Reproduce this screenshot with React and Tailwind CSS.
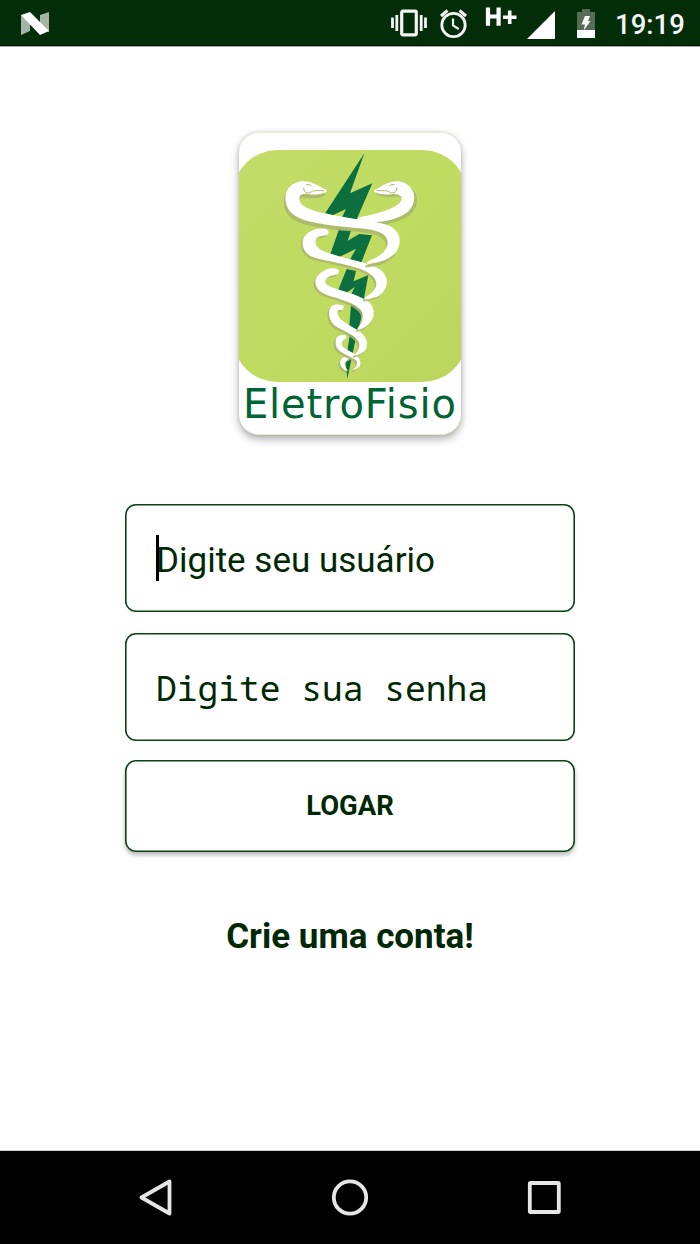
import { useState } from 'react'

// Outlines of the snake coils, from the tail up to the heads
const COILS = [
  // tail
  [[355, 709], [337, 714], [330, 729], [338, 745], [353, 753], [347, 742], [344, 731], [353, 720], [364, 715]],
  [[346, 644], [322, 650], [317, 672], [328, 692], [360, 710], [379, 722], [380, 735], [370, 750], [386, 742], [391, 725], [378, 705], [352, 689], [337, 678], [337, 665], [348, 654]],
  [[338, 556], [309, 556], [297, 578], [309, 612], [351, 637], [379, 656], [388, 674], [383, 692], [374, 705], [388, 703], [406, 690], [411, 666], [395, 639], [362, 618], [334, 599], [323, 582], [325, 571], [338, 569]],
  [[322, 447], [290, 448], [259, 473], [260, 501], [284, 522], [335, 539], [373, 555], [396, 577], [396, 603], [383, 629], [410, 617], [430, 590], [424, 554], [385, 529], [332, 511], [293, 496], [286, 481], [300, 468], [324, 461]],
  [[288, 327], [250, 330], [221, 354], [222, 388], [250, 412], [320, 428], [386, 445], [427, 467], [439, 492], [428, 515], [405, 533], [413, 538], [451, 524], [470, 494], [464, 463], [437, 441], [385, 424], [322, 407], [273, 390], [257, 370], [263, 352], [294, 343]],
]

const RIGHT_SNAKE = 'M431 211 Q446 204 461 194 Q483 184 505 183 Q541 190 551 218 Q559 251 533 276 Q503 300 440 307 L380 304 Q378 291 411 287 Q466 275 492 261 Q518 246 515 231 Q505 220 488 222 Q459 227 433 216 Z'
const LEFT_SNAKE = 'M291 211 Q276 204 261 194 Q239 184 217 183 Q181 188 169 216 Q159 252 184 279 Q206 300 260 309 Q310 319 370 323 Q433 325 459 342 Q480 359 470 382 Q460 406 412 425 Q406 432 420 431 Q471 426 497 398 Q514 375 507 347 Q499 321 459 311 Q425 305 380 298 L295 283 Q239 272 218 256 Q205 244 209 228 Q216 219 234 222 Q264 228 289 216 Z'

// Closed Catmull-Rom curve through the points
function smooth(pts) {
  const n = pts.length
  let d = `M${pts[0][0]} ${pts[0][1]}`
  for (let i = 0; i < n; i++) {
    const [p0, p1, p2, p3] = [pts[(i + n - 1) % n], pts[i], pts[(i + 1) % n], pts[(i + 2) % n]]
    d += `C${p1[0] + (p2[0] - p0[0]) / 6} ${p1[1] + (p2[1] - p0[1]) / 6} ${p2[0] - (p3[0] - p1[0]) / 6} ${p2[1] - (p3[1] - p1[1]) / 6} ${p2[0]} ${p2[1]}`
  }
  return d + 'Z'
}

function Snake({ d, drop = 'translate(-5 6)' }) {
  return (
    <>
      <path d={d} fill="#a9b56c" transform={drop} opacity="0.85" />
      <path d={d} fill="#fff" />
    </>
  )
}

function Emblem() {
  return (
    <svg viewBox="27 90 666 696" className="block h-[232px] w-[222px]">
      <defs>
        <linearGradient id="lime" x1="0" y1="0" x2="1" y2="1">
          <stop offset="0" stopColor="#c3dc6a" />
          <stop offset="0.5" stopColor="#bfdb60" />
          <stop offset="1" stopColor="#bcd65d" />
        </linearGradient>
      </defs>
      <rect x="9" y="90" width="702" height="696" rx="134" fill="url(#lime)" />
      <g fill="#0b6f40">
        <path d="M403 100 L360 220 L427 190 L380 298 L334 296 L348 267 L308 286 L286 279 Z" />
        <path d="M327 328 L363 332 L353 362 L388 342 L426 346 L391 434 L358 422 L378 386 L326 412 L300 405 Z" />
        <path d="M350 447 L378 453 L371 484 L415 465 L400 545 L360 531 L374 501 L344 522 L321 519 Z" />
        <path d="M363 552 L400 565 L384 636 L358 618 Z" />
        <path d="M360 639 L378 653 L352 776 L347 730 Z" />
      </g>
      {COILS.map((pts, i) => <Snake key={i} d={smooth(pts)} />)}
      <Snake d={RIGHT_SNAKE} drop="translate(8 8)" />
      <Snake d={LEFT_SNAKE} drop="translate(-5 11)" />
      {/* eyes and mouths */}
      <g fill="none" stroke="#aeb67b" strokeWidth="3" strokeLinecap="round">
        <path d="M229 194 Q237 190 243 197" />
        <path d="M221 204 Q221 220 238 219 Q246 212 258 212 L281 212" />
        <path d="M493 194 Q485 190 479 197" />
        <path d="M501 204 Q501 220 484 219 Q476 212 464 212 L441 212" />
      </g>
    </svg>
  )
}

function StatusBar() {
  return (
    <header className="flex h-[46px] items-start justify-between border-b border-[#001b02] bg-[#022d08] text-white shadow-[0_1px_0_#aaa]">
      <svg width="28" height="23" viewBox="0 0 28 23" className="ml-[21px] mt-3">
        <path d="M0 3 L9 7 V19 L0 23 Z M19 3 L28 0 V20 L19 17 Z" fill="#a3b5a5" />
        <path d="M0 3 L9 0 L28 19 L19 23 Z" fill="#fff" />
      </svg>
      <div className="flex items-start">
        {/* vibrate */}
        <svg width="36" height="28" viewBox="0 0 36 28" className="mt-[9px]" fill="none" stroke="#f4f4f4">
          <rect x="10.7" y="2.2" width="14.6" height="23.6" rx="1.2" strokeWidth="3.2" />
          <path d="M1.5 8.5 V19 M34.5 8.5 V19 M5.8 6 V22 M30.2 6 V22" strokeWidth="2.8" />
        </svg>
        {/* alarm */}
        <svg width="28" height="30" viewBox="0 0 28 30" className="ml-[13px] mt-[9px]" fill="none" stroke="#f4f4f4">
          <circle cx="13.5" cy="16" r="11.7" strokeWidth="2.8" />
          <path d="M1 7 L7.5 1.5 M26 7 L19.5 1.5" strokeWidth="3" />
          <path d="M13 9.5 V16.5 L18.8 20" strokeWidth="2.2" />
        </svg>
        <svg width="32" height="20" viewBox="0 0 32 20" className="ml-[17px] mt-[7px]" fill="none" stroke="#fff" strokeWidth="4.2">
          <path d="M3 0.5 V18.8 M13.6 0.5 V18.8 M3 9.5 H13.7" />
          <path d="M18 10.3 H31.5 M24.7 3.5 V17" strokeWidth="3.6" />
        </svg>
        <svg width="28" height="28" viewBox="0 0 28 28" className="ml-[10px] mt-[11px]" fill="#fff">
          <path d="M28 0 V28 H0 Z" />
        </svg>
        {/* battery */}
        <svg width="18" height="29" viewBox="0 0 18 29" className="ml-[22px] mt-[9px]">
          <path d="M5 0 H13 V3 H18 V21 H0 V3 H5 Z" fill="#536d56" />
          <rect y="21" width="18" height="8" fill="#fff" />
          <path d="M8 7 H13 L11 12 H13.5 L6.7 21.5 L8 15.5 H4.5 Z" fill="#fff" />
        </svg>
        <span className="ml-[20px] mr-[15px] mt-[10px] w-[70px] text-[27.5px] font-medium leading-[30px] text-[#f4f4f4]">19:19</span>
      </div>
    </header>
  )
}

function NavBar() {
  return (
    <nav className="flex h-[94px] items-center justify-between border-t border-[#c4cccc] bg-black pl-[138px] pr-[139px]">
      <svg width="34" height="38" viewBox="0 0 34 38" fill="none" stroke="#e6e6e6" strokeWidth="3.8" strokeLinejoin="round">
        <path d="M3.5 18.5 L31.5 2.5 V34.5 Z" />
      </svg>
      <svg width="38" height="38" viewBox="0 0 38 38" fill="none" stroke="#e6e6e6" strokeWidth="3.8">
        <circle cx="19" cy="18.5" r="16.2" />
      </svg>
      <svg width="34" height="34" viewBox="0 0 34 34" fill="none" stroke="#e6e6e6" strokeWidth="3.8">
        <rect x="2.8" y="2" width="29" height="29" rx="0.8" />
      </svg>
    </nav>
  )
}

export default function App() {
  const [user, setUser] = useState('')
  const [password, setPassword] = useState('')

  return (
    <div className="flex h-[1244px] w-[700px] flex-col bg-white font-['Roboto',sans-serif] text-[#002804]">
      <StatusBar />

      <main className="flex flex-1 flex-col items-center">
        <div className="mt-[86px] h-[303px] w-[222px] overflow-hidden rounded-[20px] border-y border-[#e8efd0] bg-white pt-[17px] shadow-[0_4px_8px_rgba(0,0,0,0.32),0_0_3px_rgba(0,0,0,0.12)]">
          <Emblem />
          <h1 className="ml-[4px] whitespace-nowrap font-['DejaVu_Sans',sans-serif] text-[40px] leading-[45px] tracking-[0.85px] text-[#006435]">EletroFisio</h1>
        </div>

        <form className="mt-[69px] flex w-[450px] flex-col" onSubmit={(e) => e.preventDefault()}>
          <div className="relative h-[108px] rounded-[11px] shadow-[inset_0_0_0_1.6px_#0b4313]">
            <input
              type="text"
              placeholder="Digite seu usuário"
              value={user}
              onChange={(e) => setUser(e.target.value)}
              className="h-full w-full bg-transparent px-[31px] pt-[4px] text-[35px] outline-none placeholder:text-[#002804]"
            />
            {/* caret */}
            <span className="absolute left-[31px] top-[31px] h-[46px] w-[3px] bg-black" />
          </div>
          <div className="mt-[21px] h-[108px] rounded-[11px] shadow-[inset_0_0_0_1.6px_#0b4313]">
            <input
              type="password"
              placeholder="Digite sua senha"
              value={password}
              onChange={(e) => setPassword(e.target.value)}
              className="h-full w-full bg-transparent px-[31px] pt-[1px] font-['Noto_Sans_Mono','DejaVu_Sans_Mono',monospace] text-[34.6px] outline-none placeholder:text-[#002804]"
            />
          </div>
          <button className="mt-[19px] h-[92px] rounded-[11px] bg-white pt-[2px] text-[27.4px] font-bold shadow-[inset_0_0_0_1.6px_#0b4313,0_3px_4px_rgba(0,0,0,0.28)]">
            LOGAR
          </button>
        </form>

        <a href="#" className="mt-[64px] text-[35px] font-bold leading-[42px]">Crie uma conta!</a>
      </main>

      <NavBar />
    </div>
  )
}
